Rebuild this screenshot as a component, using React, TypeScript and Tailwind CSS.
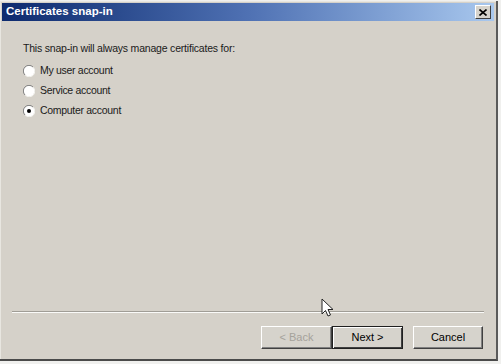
import React from "react";

const radios = [
  { label: "My user account", checked: false },
  { label: "Service account", checked: false },
  { label: "Computer account", checked: true },
];

function Radio({ checked }: { checked: boolean }) {
  return (
    <svg width="12" height="12" viewBox="0 0 12 12" className="shrink-0">
      <circle cx="6" cy="6" r="5.5" fill="#fff" />
      <path d="M10 2 A5.5 5.5 0 0 0 2 10" stroke="#808080" strokeWidth="1" fill="none" />
      <path d="M10.2 2.4 A5.5 5.5 0 0 1 2.4 10.2" stroke="#f4f3ef" strokeWidth="1" fill="none" />
      {checked && <circle cx="6" cy="6" r="2" fill="#000" />}
    </svg>
  );
}

function Button({ children, disabled, primary, wide }: { children: React.ReactNode; disabled?: boolean; primary?: boolean; wide?: boolean }) {
  return (
    <button
      className={
        "flex h-[23px] items-center justify-center bg-[#d6d3cc] text-[11px] " +
        (wide ? "w-[71px] " : "w-[70px] ") +
        (primary
          ? "border border-[#202020] shadow-[inset_1px_1px_0_#fff,inset_-1px_-1px_0_#404040]"
          : "border border-t-[#fff] border-l-[#fff] border-r-[#404040] border-b-[#404040] shadow-[inset_-1px_-1px_0_#808080]") +
        (disabled ? " text-[#a5a29b]" : " text-black")
      }
    >
      {children}
    </button>
  );
}

function Cursor() {
  return (
    <svg width="14" height="20" viewBox="0 0 14 20" className="absolute left-[321px] top-[298px]">
      <path d="M1 1 L1 16 L4.5 12.5 L7 18 L9.5 17 L7 11.5 L12 11.5 Z" fill="#fff" stroke="#222" strokeWidth="1" strokeLinejoin="round" />
    </svg>
  );
}

export default function App() {
  return (
    <div className="relative h-[364px] w-[501px] bg-[#f0f0ee] pt-[1px] font-['Liberation_Sans',Arial,sans-serif]">
      <div className="flex h-[360px] w-[498px] flex-col border-r-2 border-b-2 border-r-[#5a5a5a] border-b-[#4a4a4a] bg-[#d5d1c9] shadow-[inset_1px_1px_0_#e8e6e0]">
        {/* title bar */}
        <div className="mx-[2px] mt-[2px] flex h-[18px] items-center justify-between bg-gradient-to-r from-[#0d2a6e] via-[#4f71b3] to-[#a9c8ee] pl-[4px] pr-[3px]">
          <span className="text-[11.5px] font-bold text-white">Certificates snap-in</span>
          <div className="flex h-[14px] w-[16px] items-center justify-center border border-t-[#fff] border-l-[#fff] border-r-[#404040] border-b-[#404040] bg-[#d6d3cc]">
            <svg width="8" height="7" viewBox="0 0 8 7">
              <path d="M0.5 0.5 L7.5 6.5 M7.5 0.5 L0.5 6.5" stroke="#000" strokeWidth="1.6" />
            </svg>
          </div>
        </div>

        {/* content */}
        <div className="flex flex-1 flex-col pl-[23px] pt-[20px] text-[10.5px] text-[#1a1a1a]">
          <p className="tracking-[-0.2px]">This snap-in will always manage certificates for:</p>
          <div className="mt-[8px] flex flex-col gap-[7px]">
            {radios.map((r) => (
              <label key={r.label} className="flex h-[13px] items-center gap-[5px]">
                <Radio checked={r.checked} />
                <span className="tracking-[-0.3px]">{r.label}</span>
              </label>
            ))}
          </div>
        </div>

        {/* separator */}
        <div className="mx-[12px] h-[2px] border-t border-t-[#a09d96] border-b border-b-[#fafaf8]" />

        {/* buttons */}
        <div className="flex items-center justify-end gap-[10px] pb-[10px] pr-[13px] pt-[13px]">
          <div className="flex">
            <Button disabled wide>&lt; Back</Button>
            <Button primary wide>Next &gt;</Button>
          </div>
          <Button>Cancel</Button>
        </div>
      </div>
      <Cursor />
    </div>
  );
}
